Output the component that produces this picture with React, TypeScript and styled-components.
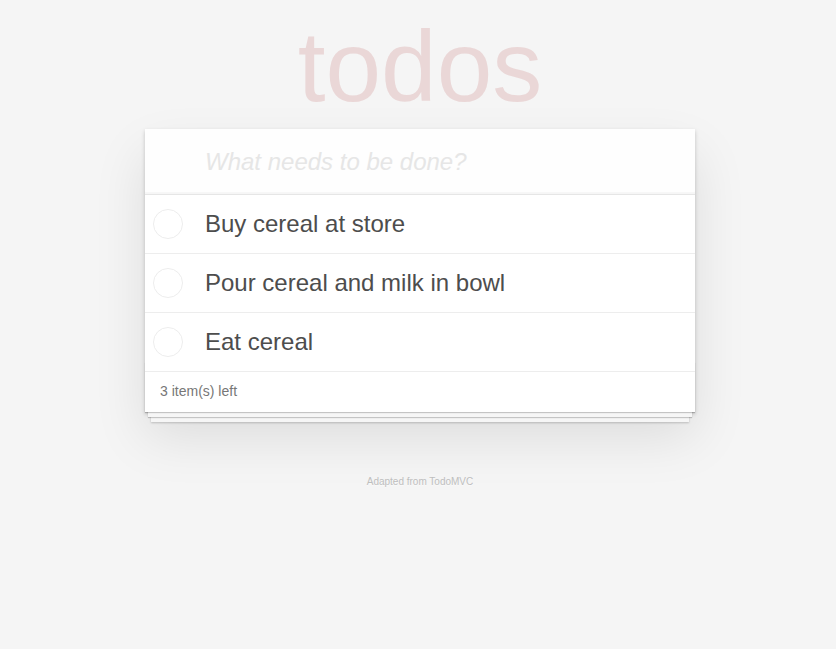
import React, { useState } from 'react';
import styled, { createGlobalStyle } from 'styled-components';

const GlobalStyle = createGlobalStyle`
  html, body {
    margin: 0;
    padding: 0;
  }
  body {
    background: #f5f5f5;
    font: 14px "Liberation Sans", Arial, sans-serif;
    line-height: 1.4em;
    color: #4d4d4d;
    -webkit-font-smoothing: antialiased;
  }
`;

const Page = styled.div`
  padding: 16px 0 0 4px;
  box-sizing: border-box;
`;

const Column = styled.div`
  width: 550px;
  margin: 0 auto;
`;

const Title = styled.h1`
  margin: 0 0 13px;
  height: 100px;
  font-size: 100px;
  line-height: 100px;
  font-weight: 100;
  text-align: center;
  color: rgba(175, 47, 47, 0.15);
`;

const Card = styled.section`
  position: relative;
  background: #fff;
  box-shadow: 0 2px 4px 0 rgba(0, 0, 0, 0.2), 0 25px 50px 0 rgba(0, 0, 0, 0.1);
`;

const NewTodo = styled.input`
  display: block;
  width: 100%;
  box-sizing: border-box;
  margin: 0;
  padding: 16px 16px 16px 60px;
  border: none;
  outline: none;
  background: rgba(0, 0, 0, 0.003);
  box-shadow: inset 0 -2px 1px rgba(0, 0, 0, 0.03);
  font-family: inherit;
  font-size: 24px;
  line-height: 1.4em;
  height: 65px;
  color: inherit;

  &::placeholder {
    font-style: italic;
    color: #e6e6e6;
  }
`;

const List = styled.ul`
  position: relative;
  z-index: 2;
  margin: 0;
  padding: 0;
  list-style: none;
  border-top: 1px solid #e6e6e6;
`;

const Item = styled.li`
  display: flex;
  align-items: center;
  border-bottom: 1px solid #ededed;
  font-size: 24px;
`;

const Toggle = styled.button`
  flex: none;
  width: 40px;
  height: 40px;
  margin: 0 0 0 3px;
  padding: 0;
  border: none;
  background: none;
  display: flex;
  align-items: center;
  justify-content: center;
  cursor: pointer;
`;

const Label = styled.label<{ $done: boolean }>`
  flex: 1;
  padding: 15px 15px 15px 17px;
  line-height: 28px;
  word-break: break-all;
  color: ${(p) => (p.$done ? '#d9d9d9' : '#4d4d4d')};
  text-decoration: ${(p) => (p.$done ? 'line-through' : 'none')};
`;

const Footer = styled.footer`
  position: relative;
  padding: 10px 15px;
  height: 20px;
  color: #777;
  border-top: 1px solid #e6e6e6;
  margin-top: -1px;
  text-align: left;

  &::before {
    content: '';
    position: absolute;
    right: 0;
    bottom: 0;
    left: 0;
    height: 50px;
    overflow: hidden;
    box-shadow: 0 1px 1px rgba(0, 0, 0, 0.2), 0 8px 0 -3px #f6f6f6,
      0 9px 1px -3px rgba(0, 0, 0, 0.2), 0 16px 0 -6px #f6f6f6,
      0 17px 2px -6px rgba(0, 0, 0, 0.2);
  }
`;

const Count = styled.span`
  position: relative;
`;

const Info = styled.footer`
  margin-top: 60px;
  color: #bfbfbf;
  font-size: 10px;
  text-shadow: 0 1px 0 rgba(255, 255, 255, 0.5);
  text-align: center;
`;

type Todo = { id: number; title: string; done: boolean };

const Circle = ({ done }: { done: boolean }) => (
  <svg width="30" height="30" viewBox="0 0 30 30">
    <circle cx="15" cy="15" r="14.5" fill="none" stroke={done ? '#bddad5' : '#ededed'} strokeWidth="1" />
    {done && <path d="M8 15.5l5 5 9-10" fill="none" stroke="#5dc2af" strokeWidth="2" />}
  </svg>
);

export default function App() {
  const [todos, setTodos] = useState<Todo[]>([
    { id: 1, title: 'Buy cereal at store', done: false },
    { id: 2, title: 'Pour cereal and milk in bowl', done: false },
    { id: 3, title: 'Eat cereal', done: false },
  ]);
  const [text, setText] = useState('');

  const left = todos.filter((t) => !t.done).length;

  const add = (e: React.KeyboardEvent<HTMLInputElement>) => {
    if (e.key !== 'Enter' || !text.trim()) return;
    setTodos([...todos, { id: Date.now(), title: text.trim(), done: false }]);
    setText('');
  };

  return (
    <Page>
      <GlobalStyle />
      <Column>
        <Title>todos</Title>
        <Card>
          <NewTodo
            placeholder="What needs to be done?"
            value={text}
            onChange={(e) => setText(e.target.value)}
            onKeyDown={add}
          />
          <List>
            {todos.map((t) => (
              <Item key={t.id}>
                <Toggle
                  onClick={() =>
                    setTodos(todos.map((x) => (x.id === t.id ? { ...x, done: !x.done } : x)))
                  }
                >
                  <Circle done={t.done} />
                </Toggle>
                <Label $done={t.done}>{t.title}</Label>
              </Item>
            ))}
          </List>
          <Footer>
            <Count>{left} item(s) left</Count>
          </Footer>
        </Card>
        <Info>Adapted from TodoMVC</Info>
      </Column>
    </Page>
  );
}
